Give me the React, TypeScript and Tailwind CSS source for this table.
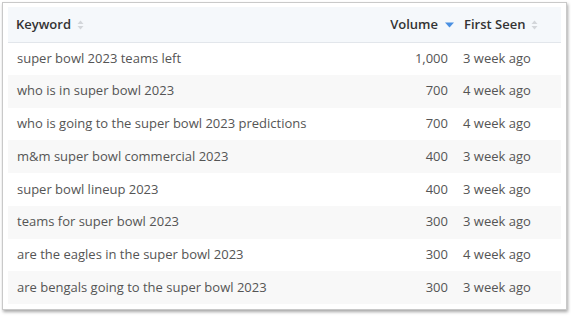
const rows = [
  { keyword: 'super bowl 2023 teams left', volume: '1,000', seen: '3 week ago' },
  { keyword: 'who is in super bowl 2023', volume: '700', seen: '4 week ago' },
  { keyword: 'who is going to the super bowl 2023 predictions', volume: '700', seen: '4 week ago' },
  { keyword: 'm&m super bowl commercial 2023', volume: '400', seen: '3 week ago' },
  { keyword: 'super bowl lineup 2023', volume: '400', seen: '3 week ago' },
  { keyword: 'teams for super bowl 2023', volume: '300', seen: '3 week ago' },
  { keyword: 'are the eagles in the super bowl 2023', volume: '300', seen: '4 week ago' },
  { keyword: 'are bengals going to the super bowl 2023', volume: '300', seen: '3 week ago' },
]

function SortIcon() {
  return (
    <svg className="inline-block ml-[6px] align-[-1px]" width="7" height="10" viewBox="0 0 7 10">
      <path d="M3.5 0.5 L6.5 4 H0.5 Z" fill="#d3d6da" />
      <path d="M3.5 9.5 L6.5 6 H0.5 Z" fill="#d3d6da" />
    </svg>
  )
}

function SortDown() {
  return (
    <svg className="inline-block ml-[7px] align-[1px]" width="9" height="6" viewBox="0 0 9 6">
      <path d="M0 0.5 H9 L4.5 5.5 Z" fill="#4a90e2" />
    </svg>
  )
}

export default function App() {
  return (
    <div className="w-[571px] h-[316px] bg-white pt-[2px] pl-[2px]" style={{ fontFamily: '"Open Sans", sans-serif' }}>
      <div className="w-[565px] h-[308px] border border-[#c9c9c9] shadow-[1px_2px_3px_rgba(0,0,0,0.35)] bg-white px-[5px] pt-[4px]">
        <table className="w-[553px] table-fixed border-collapse text-[13px]">
          <colgroup>
            <col className="w-[372px]" />
            <col className="w-[76px]" />
            <col />
          </colgroup>
          <thead>
            <tr className="bg-[#f5f8fb] border-b border-[#e2e6eb] h-[35px]">
              <th className="text-left font-semibold text-[#333] pl-[8px]">
                Keyword
                <SortIcon />
              </th>
              <th className="text-right font-semibold text-[#333] pr-[2px] whitespace-nowrap">
                Volume
                <SortDown />
              </th>
              <th className="text-left font-semibold text-[#333] pl-[8px] whitespace-nowrap">
                First Seen
                <SortIcon />
              </th>
            </tr>
          </thead>
          <tbody>
            {rows.map((r, i) => (
              <tr key={i} className={i % 2 === 1 ? 'bg-[#f8f8f8] h-[32.75px]' : 'bg-white h-[32.75px]'}>
                <td className="pl-[9px] text-[#555] whitespace-nowrap">{r.keyword}</td>
                <td className="text-right text-[#555] pr-[8px]">{r.volume}</td>
                <td className="pl-[7px] text-[#555] whitespace-nowrap">{r.seen}</td>
              </tr>
            ))}
          </tbody>
        </table>
      </div>
    </div>
  )
}
